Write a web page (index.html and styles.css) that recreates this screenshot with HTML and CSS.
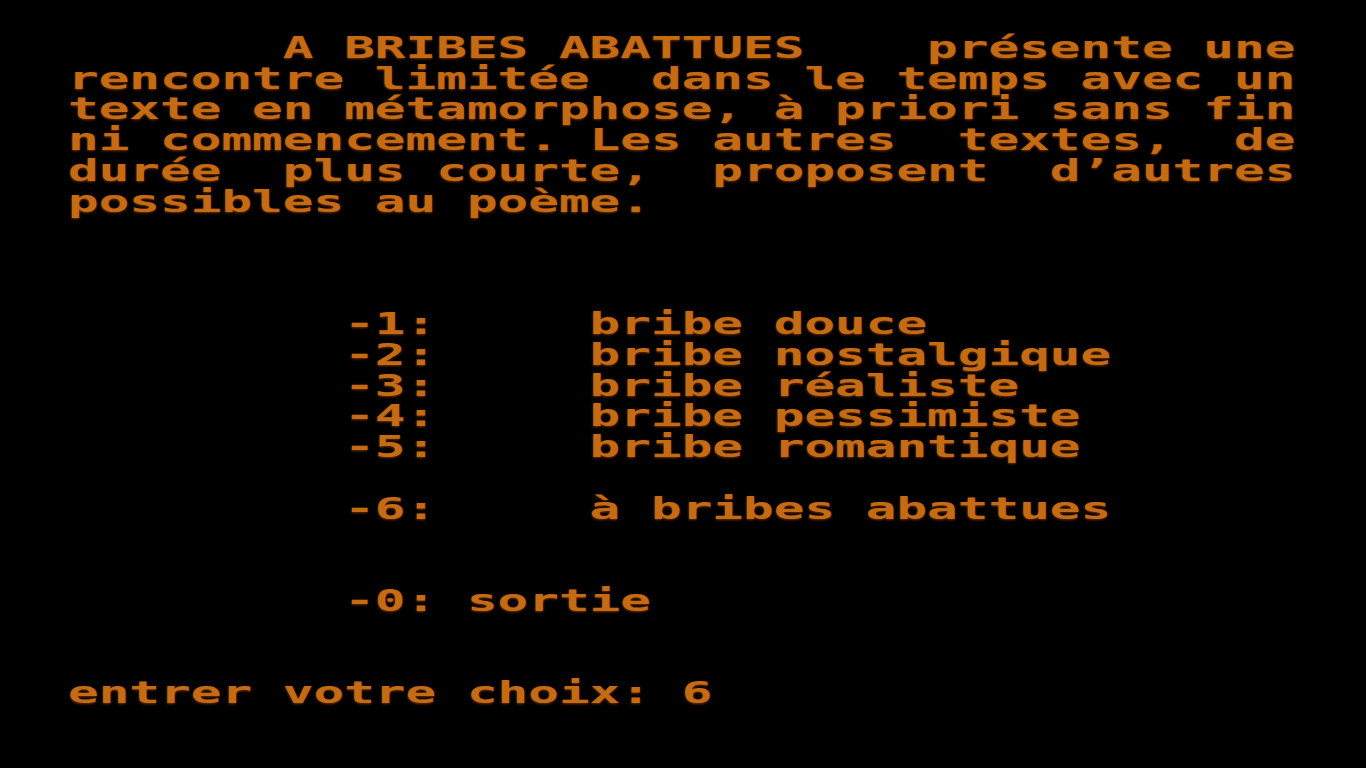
FILE: index.html
```html
<!DOCTYPE html>
<html lang="fr">
<head>
<meta charset="utf-8">
<title>A BRIBES ABATTUES</title>
<link rel="stylesheet" href="styles.css">
</head>
<body>
<main class="screen">
<pre class="term">       A BRIBES ABATTUES    présente une
rencontre limitée  dans le temps avec un
texte en métamorphose, à priori sans fin
ni commencement. Les autres  textes,  de
durée  plus courte,  proposent  d’autres
possibles au poème.



         -1:     bribe douce
         -2:     bribe nostalgique
         -3:     bribe réaliste
         -4:     bribe pessimiste
         -5:     bribe romantique

         -6:     à bribes abattues


         -0: sortie


entrer votre choix: 6</pre>
</main>
</body>
</html>
```

FILE: styles.css
```css
html, body {
  margin: 0;
  padding: 0;
  background: #000;
  width: 1366px;
  height: 768px;
  overflow: hidden;
}

.screen {
  padding: 32px 0 0 68px;
}

.term {
  display: block;
  width: 40ch;
  margin: 0;
  font-family: "DejaVu Sans Mono", "Liberation Mono", monospace;
  font-weight: bold;
  font-size: 31px;
  line-height: 30.7px;
  color: #c46b14;
  text-shadow: 0 1px 2px rgba(140, 60, 8, 0.8);
  white-space: pre;
  transform: scaleX(1.644);
  transform-origin: left top;
}
```
